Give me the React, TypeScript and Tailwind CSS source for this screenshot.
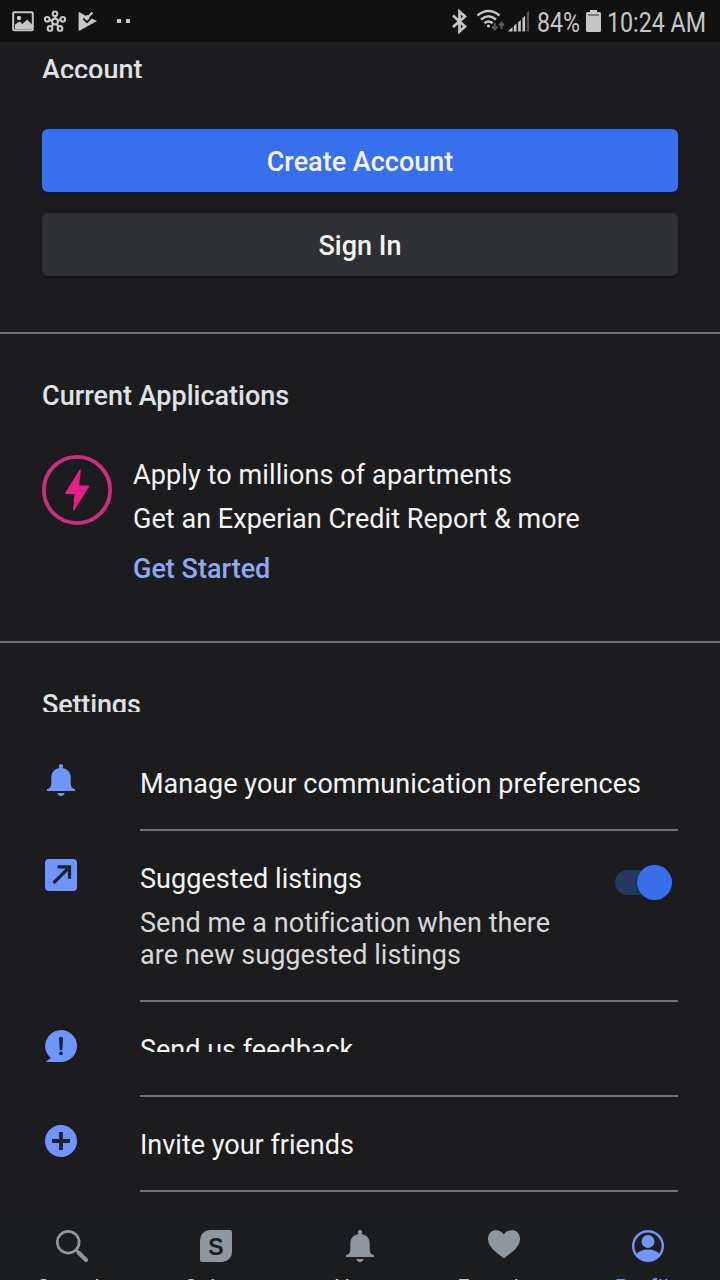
import React from "react";

type IconProps = { className?: string };

const BELL =
  "M16 0a2.200 2.200 0 0 1 2.200 2.200c0 .7-.2 1.300-.6 1.800C22.500 4.800 25.700 8.600 25.700 13.500v6c0 3 1.300 5 4.300 5.800V27H2v-1.700c3-.8 4.300-2.800 4.300-5.800v-6C6.300 8.600 9.500 4.800 14.400 4c-.4-.5-.6-1.100-.6-1.800A2.200 2.200 0 0 1 16 0zM12.300 29h7.400c-.5 1.900-1.900 3-3.700 3s-3.200-1.100-3.700-3z";

function Bell({ className }: IconProps) {
  return (
    <svg viewBox="0 0 32 32" className={className} fill="currentColor">
      <path d={BELL} />
    </svg>
  );
}

function ArrowBox() {
  return (
    <svg viewBox="0 0 32 32" className="size-8">
      <rect width="32" height="32" rx="4" fill="#6f94fb" />
      <path d="M8.500 24L24 8.500M12.500 7.800h12v12" fill="none" stroke="#1b2136" strokeWidth="3.200" />
    </svg>
  );
}

function Feedback() {
  return (
    <svg viewBox="0 0 32 32" className="size-8">
      <path d="M16 0a16 16 0 1 1 0 32H.5l5.300-3.800A16 16 0 0 1 16 0z" fill="#6f94fb" />
      <path d="M14 8.500q0-1.700 2-1.700t2 1.700l-.6 10.500q-.1 1.200-1.400 1.200t-1.400-1.200z" fill="#1b2136" />
      <circle cx="16" cy="23.300" r="1.900" fill="#1b2136" />
    </svg>
  );
}

function Plus() {
  return (
    <svg viewBox="0 0 32 32" className="size-8">
      <circle cx="16" cy="16" r="16" fill="#6f94fb" />
      <path d="M16 7v18M7 16h18" stroke="#1b2136" strokeWidth="3.800" />
    </svg>
  );
}

function StatusBar() {
  return (
    <header className="flex h-[42px] shrink-0 items-start bg-[#111111] text-[#c6c6c6]">
      <svg viewBox="0 0 240 42" className="h-[42px] w-[240px]" fill="none">
        <rect x="13.200" y="12.200" width="19.600" height="18" rx="1" stroke="#c6c6c6" strokeWidth="2" />
        <circle cx="19" cy="18" r="2.200" fill="#c6c6c6" />
        <path d="M15 29v-4.500l4.500-3 3 2.500 4.500-4.500 5 5V29z" fill="#c6c6c6" />
        <g stroke="#c6c6c6" strokeWidth="2.100">
          <circle cx="55" cy="21.500" r="2.900" />
          <circle cx="55" cy="13.800" r="2.300" />
          <circle cx="47.200" cy="19.300" r="2.300" />
          <circle cx="62.800" cy="19.300" r="2.300" />
          <circle cx="50" cy="28.400" r="2.300" />
          <circle cx="60" cy="28.400" r="2.300" />
          <path d="M55 16v3M49.500 20l3 .8M60.500 20l-3 .8M51.500 26.500l2-2.500M58.500 26.500l-2-2.500" />
        </g>
        <path d="M79 12l5.500 3 3.500 2.200 3.500 1L97 21l-17.500 9.800q-.9.300-.9-.7V12.300z" fill="#c6c6c6" />
        <path d="M86.500 15.500l1.500 1.500 4.500-4.500" stroke="#c6c6c6" strokeWidth="2.200" />
        <path d="M83.300 18.700l3.700 3.500 7.500-7.500" stroke="#151515" strokeWidth="1.800" />
        <path d="M117 19h4v4h-4zM126 19h4v4h-4z" fill="#c6c6c6" />
      </svg>
      <svg viewBox="440 0 94 42" className="ml-[200px] h-[42px] w-[94px] shrink-0" fill="none">
        <path d="M453 15.500l12 11-5.500 5V11.500l5.500 5-12 10.500" stroke="#c6c6c6" strokeWidth="2.700" />
        <g stroke="#c6c6c6" strokeWidth="2.500">
          <path d="M477.500 15.500q11-9 22 0M481 19.500q7.500-6.500 15 0M484.500 23.300q4-3.500 8 0" />
        </g>
        <circle cx="488.500" cy="26" r="1.600" fill="#c6c6c6" />
        <path d="M494.700 23v6M492 26.500l2.700 2.800 2.700-2.800M501.500 29v-6M499 25.500l2.500-2.700 2.500 2.700" stroke="#5c5c5c" strokeWidth="2" />
        <g fill="#c6c6c6">
          <path d="M508 31.500l4.500-4.500v4.500zM513.800 26l2.700-2.500v8h-2.700zM518.200 22.200l2.600-2.200v11.500h-2.600zM522.500 18.200l2.600-2.400v15.700h-2.600z" />
        </g>
        <path d="M526.800 13l2.200-2.200v20.700h-2.200z" fill="#555" />
      </svg>
      <span className="ml-[3px] w-[49px] shrink-0 origin-left scale-x-[0.86] whitespace-nowrap pt-[7px] text-[27px] leading-8">84%</span>
      <svg viewBox="0 0 15 22" className="mt-[10px] h-[22px] w-[15px] shrink-0">
        <path d="M4 0h7v2h2.500q1.500 0 1.500 1.500v17q0 1.500-1.500 1.500h-12Q0 22 0 20.500v-17Q0 2 1.500 2H4z" fill="#c6c6c6" />
        <path d="M2 5h11" stroke="#666" strokeWidth="1.500" />
      </svg>
      <span className="ml-[6px] w-[105px] shrink-0 origin-left scale-x-[0.86] whitespace-nowrap pt-[7px] text-[27px] leading-8">10:24 AM</span>
    </header>
  );
}

function SettingRow({ icon, children, className }: { icon: React.ReactNode; children: React.ReactNode; className: string }) {
  return (
    <div className={`flex pl-[45px] pr-[42px] ${className}`}>
      <div className="w-[95px] shrink-0 pt-[28px]">{icon}</div>
      <div className="flex-1 border-b-2 border-[#6b747b] pt-[32px]">{children}</div>
    </div>
  );
}

function NavItem({ label, active, children }: { label: string; active?: boolean; children: React.ReactNode }) {
  return (
    <div className={`flex w-36 shrink-0 flex-col items-center pt-[16px] ${active ? "text-[#7195fa]" : "text-[#90969d]"}`}>
      {children}
      <span className={`mt-[14px] text-[22px] leading-6 tracking-[0.4px] ${active ? "text-[#7195fa]" : "text-[#c3c6ca]"}`}>{label}</span>
    </div>
  );
}

export default function App() {
  return (
    <div className="flex h-[1280px] w-[720px] flex-col overflow-hidden bg-[#1c1c1e] font-['Roboto',sans-serif] text-[27px] leading-8 text-[#f4f4f4]">
      <StatusBar />
      <section className="h-[292px] shrink-0 border-b-2 border-[#6b747b] px-[42px] pt-[12px]">
        <h2 className="h-[24px] overflow-hidden font-medium text-[#dfe1e3]">Account</h2>
        <button className="mt-[51px] block h-[63px] w-full rounded-[6px] bg-[#386fec] pt-[2px] font-medium shadow-[0_1px_3px_#071638]">Create Account</button>
        <button className="mt-[21px] block h-[63px] w-full rounded-[6px] bg-[#2f3034] pt-[2px] font-medium shadow-[0_1px_3px_#111]">Sign In</button>
      </section>
      <section className="h-[309px] shrink-0 border-b-2 border-[#6b747b] px-[42px] pt-[46px]">
        <h2 className="font-medium text-[#dfe1e3]">Current Applications</h2>
        <div className="mt-[43px] flex">
          <svg viewBox="0 0 70 70" className="size-[70px] shrink-0">
            <circle cx="35" cy="35" r="33.100" fill="none" stroke="#cb2f7c" strokeWidth="3.800" />
            <path d="M37.800 14.500q1.200-1.200 1 .5L37.200 30.500h9q1.500 0 .5 1.500L32.500 55q-1.500 2-1.300-.5l1.300-15.500h-8.300q-1.800 0-.8-1.600z" fill="#e61f84" />
          </svg>
          <div className="ml-[21px] pt-1">
            <p className="tracking-[0.1px]">Apply to millions of apartments</p>
            <p className="mt-3 tracking-[0.04px]">Get an Experian Credit Report &amp; more</p>
            <p className="mt-[18px] font-medium text-[#8da9f2]">Get Started</p>
          </div>
        </div>
      </section>
      <section className="h-[571px] shrink-0">
        <h2 className="ml-[42px] mt-[46px] h-[23px] overflow-hidden font-medium tracking-[-0.15px] text-[#dfe1e3]">Settings</h2>
        <div className="mt-[24px]">
          <SettingRow className="h-[95px]" icon={<Bell className="size-8 text-[#6f94fb]" />}>
            <p className="whitespace-nowrap tracking-[0.04px]">Manage your communication preferences</p>
          </SettingRow>
          <SettingRow className="h-[171px]" icon={<ArrowBox />}>
            <div className="flex justify-between">
              <div>
                <p className="tracking-[0.05px]">Suggested listings</p>
                <p className="mt-3 whitespace-nowrap tracking-[0.05px] text-[#d7d7d8]">Send me a notification when there<br />are new suggested listings</p>
              </div>
              <div className="mr-[6px] mt-[7px] flex h-[25px] w-[57px] shrink-0 items-center justify-end rounded-full bg-[#243960]">
                <span className="size-[35px] shrink-0 rounded-full bg-[#386fe8] shadow-[0_1px_3px_#14213f]" />
              </div>
            </div>
          </SettingRow>
          <SettingRow className="h-[95px]" icon={<Feedback />}>
            <p className="h-[18px] overflow-hidden">Send us feedback</p>
          </SettingRow>
          <SettingRow className="h-[95px]" icon={<Plus />}>
            <p>Invite your friends</p>
          </SettingRow>
        </div>
      </section>
      <nav className="flex h-[66px] shrink-0 overflow-hidden bg-[#1c1d1f]">
        <NavItem label="Search">
          <svg viewBox="0 0 32 32" className="size-8 shrink-0" fill="none" stroke="currentColor">
            <circle cx="12.200" cy="12.200" r="10.900" strokeWidth="2.700" />
            <path d="M19.500 19.500L22 22" strokeWidth="2.500" />
            <path d="M23 23L30 30" strokeWidth="4.200" strokeLinecap="round" />
          </svg>
        </NavItem>
        <NavItem label="Select">
          <span className="flex size-8 shrink-0 items-center justify-center rounded-[10px_2px_10px_2px] bg-[#90969d] pt-[2px] font-['Liberation_Sans',sans-serif] text-[23px] font-bold text-[#1c1d1f]">S</span>
        </NavItem>
        <NavItem label="Alerts"><Bell className="size-8 shrink-0" /></NavItem>
        <NavItem label="Favorites">
          <svg viewBox="0 0 32 32" className="size-8 shrink-0" fill="currentColor">
            <path d="M16 4.200C13 .5 9.500-.2 6.500.3 2.500 1 0 4.500 0 9.200c0 7.500 9 14 16 19 7-5 16-11.500 16-19 0-4.700-2.500-8.200-6.500-8.900-3-.5-6.500.2-9.500 3.900z" />
          </svg>
        </NavItem>
        <NavItem label="Profile" active>
          <svg viewBox="0 0 32 32" className="size-8 shrink-0" fill="currentColor">
            <circle cx="16" cy="16" r="14.800" fill="none" stroke="currentColor" strokeWidth="2.400" />
            <circle cx="16" cy="11.500" r="6.500" />
            <path d="M4 24.500q4.500-5 12-5t12 5q-4 6.500-12 6.500T4 24.500z" />
          </svg>
        </NavItem>
      </nav>
    </div>
  );
}
